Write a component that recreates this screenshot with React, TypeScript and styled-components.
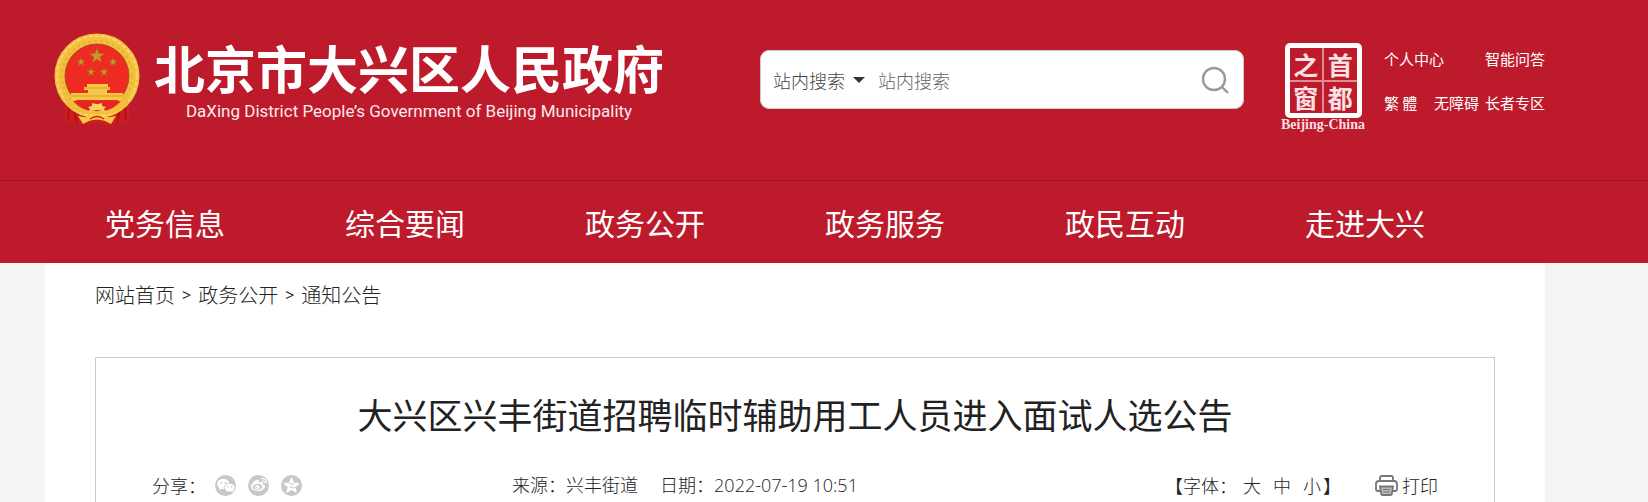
import React from "react";
import styled, { createGlobalStyle } from "styled-components";
import { FaWeibo } from "react-icons/fa";

const GlobalStyle = createGlobalStyle`
  * { box-sizing: border-box; }
  body {
    margin: 0;
    background: #f4f4f4;
    color: #222;
    font-family: "Noto Sans CJK SC", sans-serif;
    font-size: 18px;
    font-weight: 300;
  }
  a { color: inherit; text-decoration: none; }
  button, input, select { font: inherit; color: inherit; }
`;

const Page = styled.div`
  display: flex;
  flex-direction: column;
  min-height: 100vh;
`;

const Header = styled.header`
  background: #bd1a2c;
  color: #fff;
`;

const Shell = styled.div`
  margin: 0 103px 0 45px;
`;

const Masthead = styled(Shell)`
  display: flex;
  align-items: flex-start;
  height: 180px;
  padding-left: 9px;
`;

const Brand = styled.a`
  display: flex;
  align-items: flex-start;
  flex: 1;
  padding-top: 33px;
`;

const EmblemArt = styled.svg`
  flex: none;
  width: 86px;
  height: 93px;
  margin-right: 14px;
`;

const BrandText = styled.span`
  display: flex;
  flex-direction: column;
  align-items: center;
  white-space: nowrap;
`;

const BrandName = styled.span`
  font-size: 51px;
  font-weight: 700;
  line-height: 68px;
`;

const BrandEnglish = styled.span`
  font-family: Roboto, sans-serif;
  font-size: 17px;
  font-weight: 400;
  line-height: 20px;
  color: #fbeaec;
`;

const SearchForm = styled.form`
  display: flex;
  align-items: center;
  flex: 0 1 484px;
  height: 59px;
  margin-top: 50px;
  padding: 0 14px 0 12px;
  border: 1px solid #ccc;
  border-radius: 9px;
  background: #fff;
  color: #444;
`;

const ScopeBox = styled.label`
  display: flex;
  align-items: center;
  gap: 8px;
  flex: none;
`;

const ScopeSelect = styled.select`
  appearance: none;
  width: 72px;
  padding: 0;
  border: 0;
  background: transparent;
`;

const Caret = styled.span`
  border: 6px solid transparent;
  border-top-color: #333;
  border-bottom: 0;
`;

const SearchInput = styled.input`
  flex: 1;
  min-width: 0;
  margin-left: 13px;
  padding: 0;
  border: 0;
  outline: 0;
  background: transparent;
  &::placeholder { color: #666; opacity: 1; }
`;

const IconButton = styled.button`
  display: flex;
  padding: 0;
  border: 0;
  background: transparent;
`;

const Portal = styled.a`
  display: flex;
  flex-direction: column;
  align-items: center;
  flex: none;
  width: 86px;
  margin: 43px 18px 0 36px;
`;

const Seal = styled.span`
  display: grid;
  grid-template-columns: 1fr 1fr;
  grid-template-rows: 1fr 1fr;
  gap: 2px;
  width: 77px;
  height: 75px;
  border: 5px solid #fff;
  border-radius: 5px;
  background: #de8c95;
`;

const SealCell = styled.span`
  display: flex;
  align-items: center;
  justify-content: center;
  background: #bd1a2c;
  color: #f8e0e3;
  font-size: 25px;
  font-weight: 700;
  line-height: 30px;
`;

const PortalName = styled.span`
  color: #f8dfe2;
  font-family: "Liberation Serif", serif;
  font-size: 14px;
  font-weight: 700;
  line-height: 14px;
`;

const QuickLinks = styled.nav`
  display: flex;
  flex-direction: column;
  gap: 20px;
  flex: none;
  width: 161px;
  padding-top: 47px;
  font-size: 15px;
  font-weight: 400;
  line-height: 24px;
`;

const LinkRow = styled.div`
  display: flex;
  justify-content: space-between;
`;

const LinkGroup = styled.span`
  display: flex;
  gap: 6px;
`;

const MainNav = styled.nav`
  border-top: 1px solid #96161f;
`;

const NavList = styled(Shell).attrs({ as: "ul" })`
  display: flex;
  padding: 0;
  list-style: none;
`;

const NavItem = styled.li`
  flex: 0 0 16%;
  text-align: center;
  white-space: nowrap;
  font-size: 30px;
  font-weight: 400;
  line-height: 82px;
`;

const Main = styled.main`
  display: flex;
  flex-direction: column;
  flex: 1;
  margin: 0 103px 0 45px;
  padding: 0 50px;
  background: #fff;
`;

const Breadcrumb = styled.nav`
  display: flex;
  gap: 7px;
  margin-bottom: 30px;
  font-size: 20px;
  line-height: 64px;
`;

const Separator = styled.span`
  font-family: "Open Sans", sans-serif;
  font-size: 16px;
  font-weight: 400;
`;

const Article = styled.article`
  flex: 1;
  padding: 0 56px;
  border: 1px solid #ccc;
  border-bottom: 0;
`;

const Title = styled.h1`
  margin: 30px 0;
  color: #222;
  font-size: 35px;
  font-weight: 400;
  line-height: 52px;
  text-align: center;
`;

const MetaBar = styled.div`
  display: flex;
  align-items: center;
  line-height: 30px;
  white-space: nowrap;
`;

const Share = styled.div`
  display: flex;
  align-items: center;
  flex: 0 0 28%;
  gap: 9px;
`;

const ShareList = styled.div`
  display: flex;
  gap: 12px;
`;

const ShareIcon = styled.button`
  display: flex;
  align-items: center;
  justify-content: center;
  width: 21px;
  height: 21px;
  padding: 0;
  border: 0;
  border-radius: 50%;
  background: #c8c8c8;
  color: #fff;
`;

const Source = styled.div`
  display: flex;
  gap: 22px;
  font-family: "Open Sans", "Noto Sans CJK SC", sans-serif;
`;

const Tools = styled.div`
  display: flex;
  align-items: center;
  gap: 34px;
  margin-left: auto;
`;

const FontSizes = styled.div`
  display: flex;
`;

const SizeList = styled.span`
  display: flex;
  gap: 12px;
  padding: 0 2px 0 6px;
`;

const TextButton = styled.button`
  display: flex;
  align-items: center;
  gap: 4px;
  padding: 0;
  border: 0;
  background: transparent;
`;

const star = (cx: number, cy: number, r: number) =>
  Array.from({ length: 10 }, (_, i) => {
    const radius = i % 2 ? r * 0.4 : r;
    const angle = (Math.PI / 5) * i - Math.PI / 2;
    return `${cx + radius * Math.cos(angle)},${cy + radius * Math.sin(angle)}`;
  }).join(" ");

const Emblem = () => (
  <EmblemArt viewBox="0 -1 86 93" aria-hidden="true">
    <path d="M12 62 L10 82 Q12 90 22 89 L33 91 L43 88 L53 91 L64 89 Q74 90 76 82 L74 62 Z" fill="#d01c1c" />
    <path d="M15 72 L14 86 M20 76 L23 89 M71 72 L72 86 M66 76 L63 89" stroke="#a81519" strokeWidth="2" />
    <circle cx="43" cy="42" r="37" fill="none" stroke="#f3c040" strokeWidth="11" />
    <circle cx="43" cy="42" r="40" fill="none" stroke="#fbd768" strokeWidth="2" strokeDasharray="4 2" />
    <circle cx="43" cy="42" r="35" fill="none" stroke="#ebb033" strokeWidth="2" strokeDasharray="3 3" />
    <circle cx="43" cy="42" r="32" fill="#ee2a22" stroke="#a5571a" strokeWidth="1" />
    <g fill="#c8952e" stroke="#a3661c" strokeWidth="0.5">
      <polygon points={star(43, 22, 8)} />
      <polygon points={star(27, 28, 4.5)} />
      <polygon points={star(59, 28, 4.5)} />
      <polygon points={star(37, 38, 4.5)} />
      <polygon points={star(50, 38, 4.5)} />
    </g>
    <path d="M33 50 H54 V53 H56 V56 H53 V59 H69 V66 H17 V59 H34 V56 H30 V53 H33 Z" fill="#f6c945" />
    <path d="M31 54 H55 M17 62 H69" stroke="#d99a28" strokeWidth="1" />
    <path d="M19 67 H67 Q60 75 50 77 H36 Q26 75 19 67 Z" fill="#e32620" />
    <path d="M10 62 Q22 79 43 79 Q64 79 76 62 L72 72 Q60 80 52 80 Q46 78 43 78 Q40 78 34 80 Q26 80 14 72 Z" fill="#f2bd38" />
    <path d="M34 79 L36 75 L34 73 L38 72 L38 69 L42 70 L44 70 L48 69 L48 72 L52 73 L50 75 L52 79 Q43 73 34 79 Z" fill="#f9d35c" />
    <path d="M24 82 Q35 85 43 80 Q51 85 62 82 L57 90 L51 87 Q43 84 35 87 L29 90 Z" fill="#f6c945" />
    <path d="M36 85 Q43 80 50 85" fill="none" stroke="#d01c1c" strokeWidth="1.5" />
  </EmblemArt>
);

const SearchIcon = () => (
  <svg width="28" height="28" viewBox="0 0 28 28" fill="none" stroke="#999" strokeWidth="2.4" aria-hidden="true">
    <circle cx="13" cy="13" r="11" />
    <path d="M20.5 20.5 L27 27" />
  </svg>
);

const WechatIcon = () => (
  <svg width="21" height="21" viewBox="0 0 21 21" aria-hidden="true">
    <path d="M8.4 4 C4.8 4 2.4 6.2 2.4 9 C2.4 10.6 3.2 12 4.5 12.9 L4 15 L6.3 13.8 L9 14 Z" fill="#fff" />
    <ellipse cx="8.4" cy="9" rx="6" ry="5" fill="#fff" />
    <ellipse cx="14.6" cy="12.6" rx="5.4" ry="4.4" fill="#fff" stroke="#c8c8c8" strokeWidth="0.8" />
    <path d="M16 16 L18.6 17.6 L18 15 Z" fill="#fff" />
    <g fill="#c8c8c8">
      <circle cx="6.3" cy="7.7" r="0.9" />
      <circle cx="10.4" cy="7.7" r="0.9" />
      <circle cx="12.8" cy="11.8" r="0.8" />
      <circle cx="16.4" cy="11.8" r="0.8" />
    </g>
  </svg>
);

const QzoneIcon = () => (
  <svg width="21" height="21" viewBox="0 0 21 21" aria-hidden="true">
    <polygon points={star(10.5, 10.8, 7)} fill="#fff" stroke="#fff" strokeWidth="2" strokeLinejoin="round" />
    <path d="M7.8 8.8 Q10.5 8.2 12.6 9 L9 12.4 Q11.6 13.2 14 12.4" fill="none" stroke="#c8c8c8" strokeWidth="0.9" />
  </svg>
);

const PrinterIcon = () => (
  <svg width="23" height="21" viewBox="0 0 23 21" fill="none" stroke="#777" strokeWidth="1.8" aria-hidden="true">
    <path d="M5 6 V3 Q5 1 7 1 H16 Q18 1 18 3 V6" />
    <path d="M5 16 H3 Q1 16 1 14 V9 Q1 6 4 6 H19 Q22 6 22 9 V14 Q22 16 20 16 H18" />
    <path d="M5 11.5 H18 L17 18 Q17 20 15 20 H8 Q6 20 6 18 Z" fill="#bbb" />
    <path d="M8 14.5 H15 M8 17 H15" strokeWidth="1.2" />
  </svg>
);

const sections = ["党务信息", "综合要闻", "政务公开", "政务服务", "政民互动", "走进大兴"];

export default function App() {
  return (
    <Page>
      <GlobalStyle />
      <Header>
        <Masthead>
          <Brand href="#">
            <Emblem />
            <BrandText>
              <BrandName>北京市大兴区人民政府</BrandName>
              <BrandEnglish>DaXing District People’s Government of Beijing Municipality</BrandEnglish>
            </BrandText>
          </Brand>
          <SearchForm role="search">
            <ScopeBox>
              <ScopeSelect aria-label="搜索范围">
                <option>站内搜索</option>
              </ScopeSelect>
              <Caret />
            </ScopeBox>
            <SearchInput type="text" placeholder="站内搜索" aria-label="站内搜索" />
            <IconButton type="button" aria-label="搜索">
              <SearchIcon />
            </IconButton>
          </SearchForm>
          <Portal href="#">
            <Seal>
              <SealCell>之</SealCell>
              <SealCell>首</SealCell>
              <SealCell>窗</SealCell>
              <SealCell>都</SealCell>
            </Seal>
            <PortalName>Beijing-China</PortalName>
          </Portal>
          <QuickLinks>
            <LinkRow>
              <a href="#">个人中心</a>
              <a href="#">智能问答</a>
            </LinkRow>
            <LinkRow>
              <a href="#">繁 體</a>
              <LinkGroup>
                <a href="#">无障碍</a>
                <a href="#">长者专区</a>
              </LinkGroup>
            </LinkRow>
          </QuickLinks>
        </Masthead>
        <MainNav>
          <NavList>
            {sections.map((name) => (
              <NavItem key={name}>
                <a href="#">{name}</a>
              </NavItem>
            ))}
          </NavList>
        </MainNav>
      </Header>
      <Main>
        <Breadcrumb>
          <a href="#">网站首页</a>
          <Separator>&gt;</Separator>
          <a href="#">政务公开</a>
          <Separator>&gt;</Separator>
          <a href="#">通知公告</a>
        </Breadcrumb>
        <Article>
          <Title>大兴区兴丰街道招聘临时辅助用工人员进入面试人选公告</Title>
          <MetaBar>
            <Share>
              <span>分享：</span>
              <ShareList>
                <ShareIcon type="button" aria-label="微信"><WechatIcon /></ShareIcon>
                <ShareIcon type="button" aria-label="微博"><FaWeibo size={16} /></ShareIcon>
                <ShareIcon type="button" aria-label="QQ空间"><QzoneIcon /></ShareIcon>
              </ShareList>
            </Share>
            <Source>
              <span>来源：兴丰街道</span>
              <span>日期：2022-07-19 10:51</span>
            </Source>
            <Tools>
              <FontSizes>
                <span>【字体：</span>
                <SizeList>
                  <TextButton type="button">大</TextButton>
                  <TextButton type="button">中</TextButton>
                  <TextButton type="button">小</TextButton>
                </SizeList>
                <span>】</span>
              </FontSizes>
              <TextButton type="button">
                <PrinterIcon />
                打印
              </TextButton>
            </Tools>
          </MetaBar>
        </Article>
      </Main>
    </Page>
  );
}
